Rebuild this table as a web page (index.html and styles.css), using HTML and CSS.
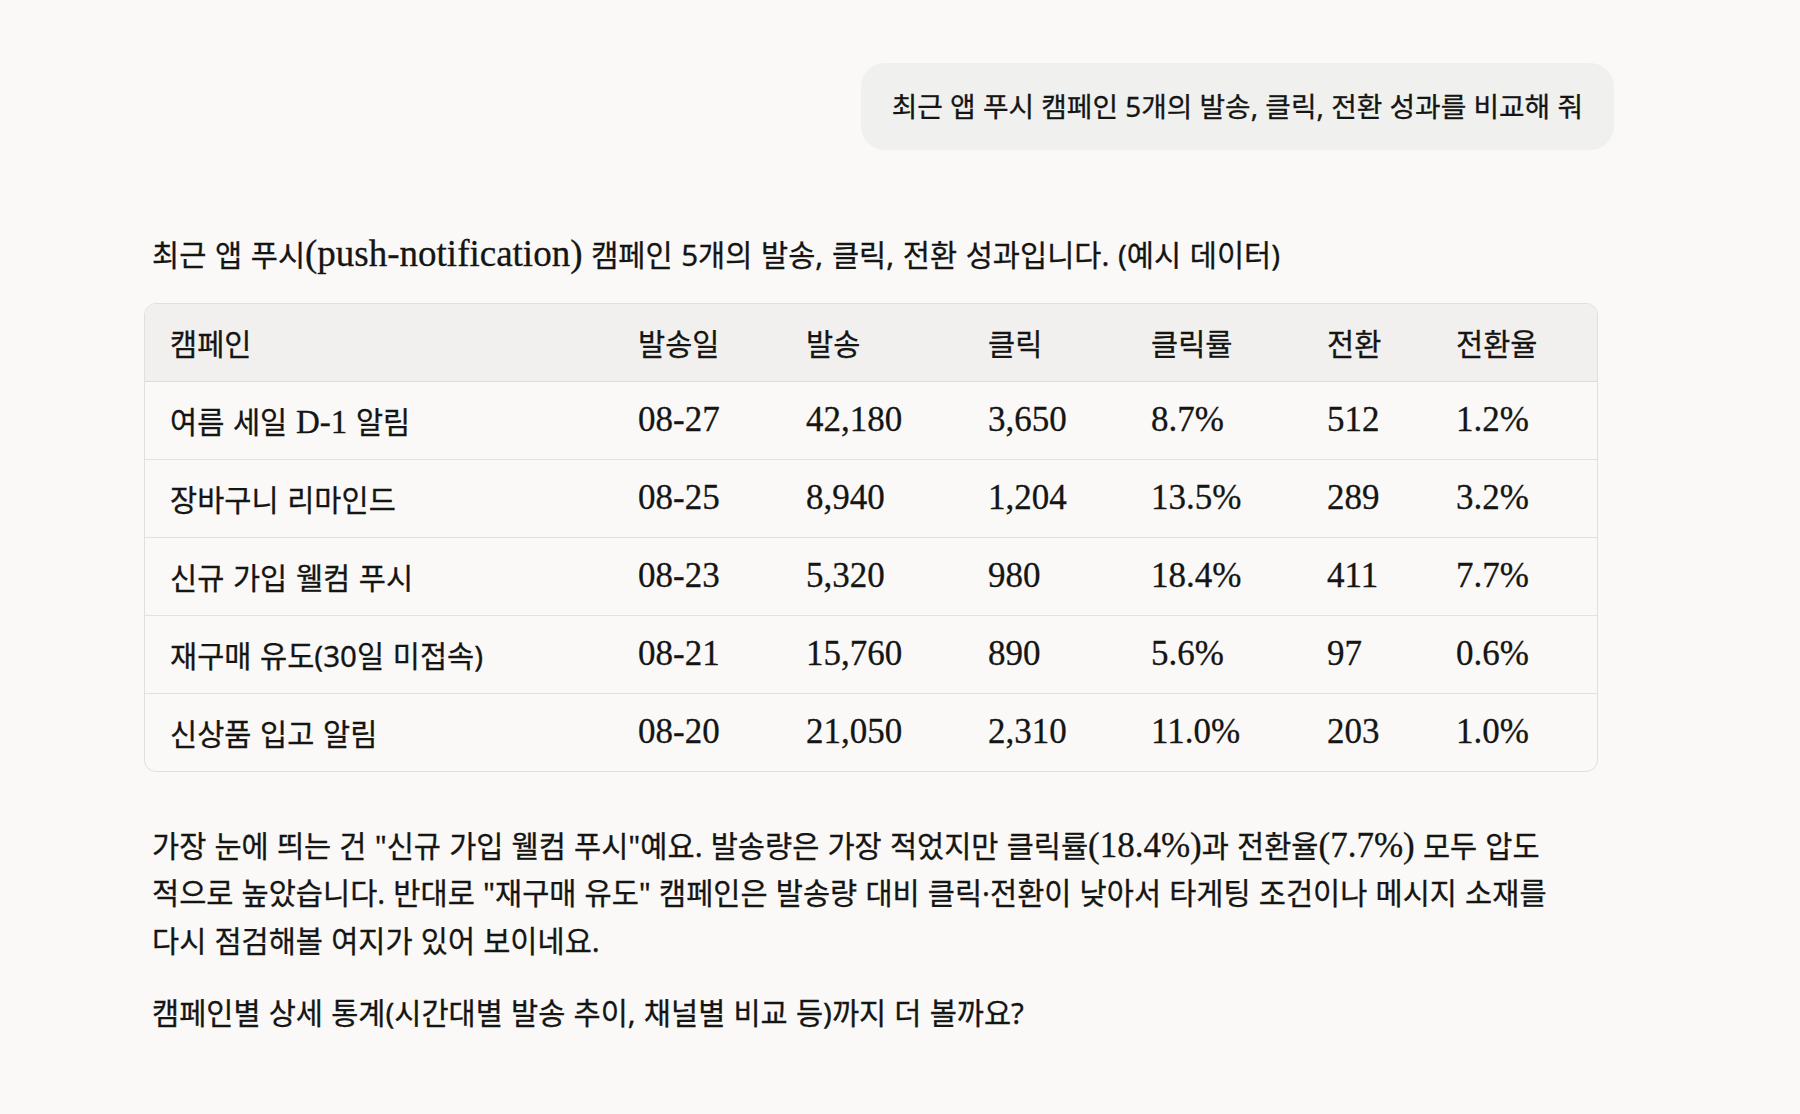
FILE: index.html
```html
<!DOCTYPE html>
<html lang="ko">
<head>
<meta charset="utf-8">
<title>앱 푸시 캠페인 성과</title>
<link rel="stylesheet" href="styles.css">
</head>
<body>
<div class="page">
  <div class="user-row">
    <div class="bubble">최근 앱 푸시 캠페인 5개의 발송, 클릭, 전환 성과를 비교해 줘</div>
  </div>
  <div class="answer">
    <p class="intro">최근 앱 푸시<span class="lat lg">(push-notification)</span> 캠페인 5개의 발송, 클릭, 전환 성과입니다. (예시 데이터)</p>
    <div class="table-wrap">
      <table class="data">
        <colgroup>
          <col class="c1"><col class="c2"><col class="c3"><col class="c4"><col class="c5"><col class="c6"><col class="c7">
        </colgroup>
        <thead>
          <tr><th>캠페인</th><th>발송일</th><th>발송</th><th>클릭</th><th>클릭률</th><th>전환</th><th>전환율</th></tr>
        </thead>
        <tbody>
          <tr><td>여름 세일 <span class="lat sm">D-1</span> 알림</td><td class="num">08-27</td><td class="num">42,180</td><td class="num">3,650</td><td class="num">8.7%</td><td class="num">512</td><td class="num">1.2%</td></tr>
          <tr><td>장바구니 리마인드</td><td class="num">08-25</td><td class="num">8,940</td><td class="num">1,204</td><td class="num">13.5%</td><td class="num">289</td><td class="num">3.2%</td></tr>
          <tr><td>신규 가입 웰컴 푸시</td><td class="num">08-23</td><td class="num">5,320</td><td class="num">980</td><td class="num">18.4%</td><td class="num">411</td><td class="num">7.7%</td></tr>
          <tr><td>재구매 유도(30일 미접속)</td><td class="num">08-21</td><td class="num">15,760</td><td class="num">890</td><td class="num">5.6%</td><td class="num">97</td><td class="num">0.6%</td></tr>
          <tr><td>신상품 입고 알림</td><td class="num">08-20</td><td class="num">21,050</td><td class="num">2,310</td><td class="num">11.0%</td><td class="num">203</td><td class="num">1.0%</td></tr>
        </tbody>
      </table>
    </div>
    <p class="para first">가장 눈에 띄는 건 "신규 가입 웰컴 푸시"예요. 발송량은 가장 적었지만 클릭률<span class="lat">(18.4%)</span>과 전환율<span class="lat">(7.7%)</span> 모두 압도적으로 높았습니다. 반대로 "재구매 유도" 캠페인은 발송량 대비 클릭·전환이 낮아서 타게팅 조건이나 메시지 소재를 다시 점검해볼 여지가 있어 보이네요.</p>
    <p class="para">캠페인별 상세 통계(시간대별 발송 추이, 채널별 비교 등)까지 더 볼까요?</p>
  </div>
</div>
</body>
</html>
```

FILE: styles.css
```css
html, body {
  margin: 0;
  padding: 0;
}

body {
  background: #faf9f7;
  color: #151514;
  font-family: "Noto Sans", "Noto Sans CJK KR", sans-serif;
  font-size: 29.5px;
  font-weight: 400;
  -webkit-text-stroke: 0.3px currentColor;
}

.page {
  padding-top: 63px;
}

.user-row {
  display: flex;
  justify-content: flex-end;
  width: 1614px;
}

.bubble {
  background: #f0f0ee;
  border-radius: 24px;
  padding: 22px 31px;
  font-size: 27.8px;
  line-height: 43px;
}

.answer {
  margin-left: 152px;
  width: 1446px;
}

.intro {
  margin: 81px 0 0;
  line-height: 47.5px;
  word-spacing: 1px;
}

.lat,
.data td.num {
  font-family: "Liberation Serif", "Times New Roman", serif;
  font-size: 35px;
  font-weight: normal;
}

.lat {
  line-height: 1;
}

.lat.sm {
  font-size: 33px;
}

.lat.lg {
  font-size: 37px;
}

.table-wrap {
  margin: 24px 0 0 -8px;
  width: 1452px;
  border: 1px solid #e0dfdc;
  border-radius: 12px;
  overflow: hidden;
}

.data {
  width: 100%;
  border-collapse: separate;
  border-spacing: 0;
  table-layout: fixed;
}

.c1 { width: 468px; }
.c2 { width: 168px; }
.c3 { width: 182px; }
.c4 { width: 163px; }
.c5 { width: 176px; }
.c6 { width: 129px; }
.c7 { width: 166px; }

.data th,
.data td {
  box-sizing: border-box;
  height: 78px;
  padding: 0 0 0 25px;
  text-align: left;
  font-weight: 400;
  vertical-align: middle;
  border-bottom: 1px solid #e3e2df;
  word-spacing: 1px;
  white-space: nowrap;
}

.data thead th {
  background: #f1f0ee;
  border-bottom-color: #dcdbd8;
}

.data tbody tr:last-child td {
  border-bottom: none;
  height: 77px;
}

.para {
  width: 1405px;
  margin: 25px 0 0;
  line-height: 47.5px;
  word-spacing: 0.5px;
}

.para.first {
  margin-top: 50px;
}
```
